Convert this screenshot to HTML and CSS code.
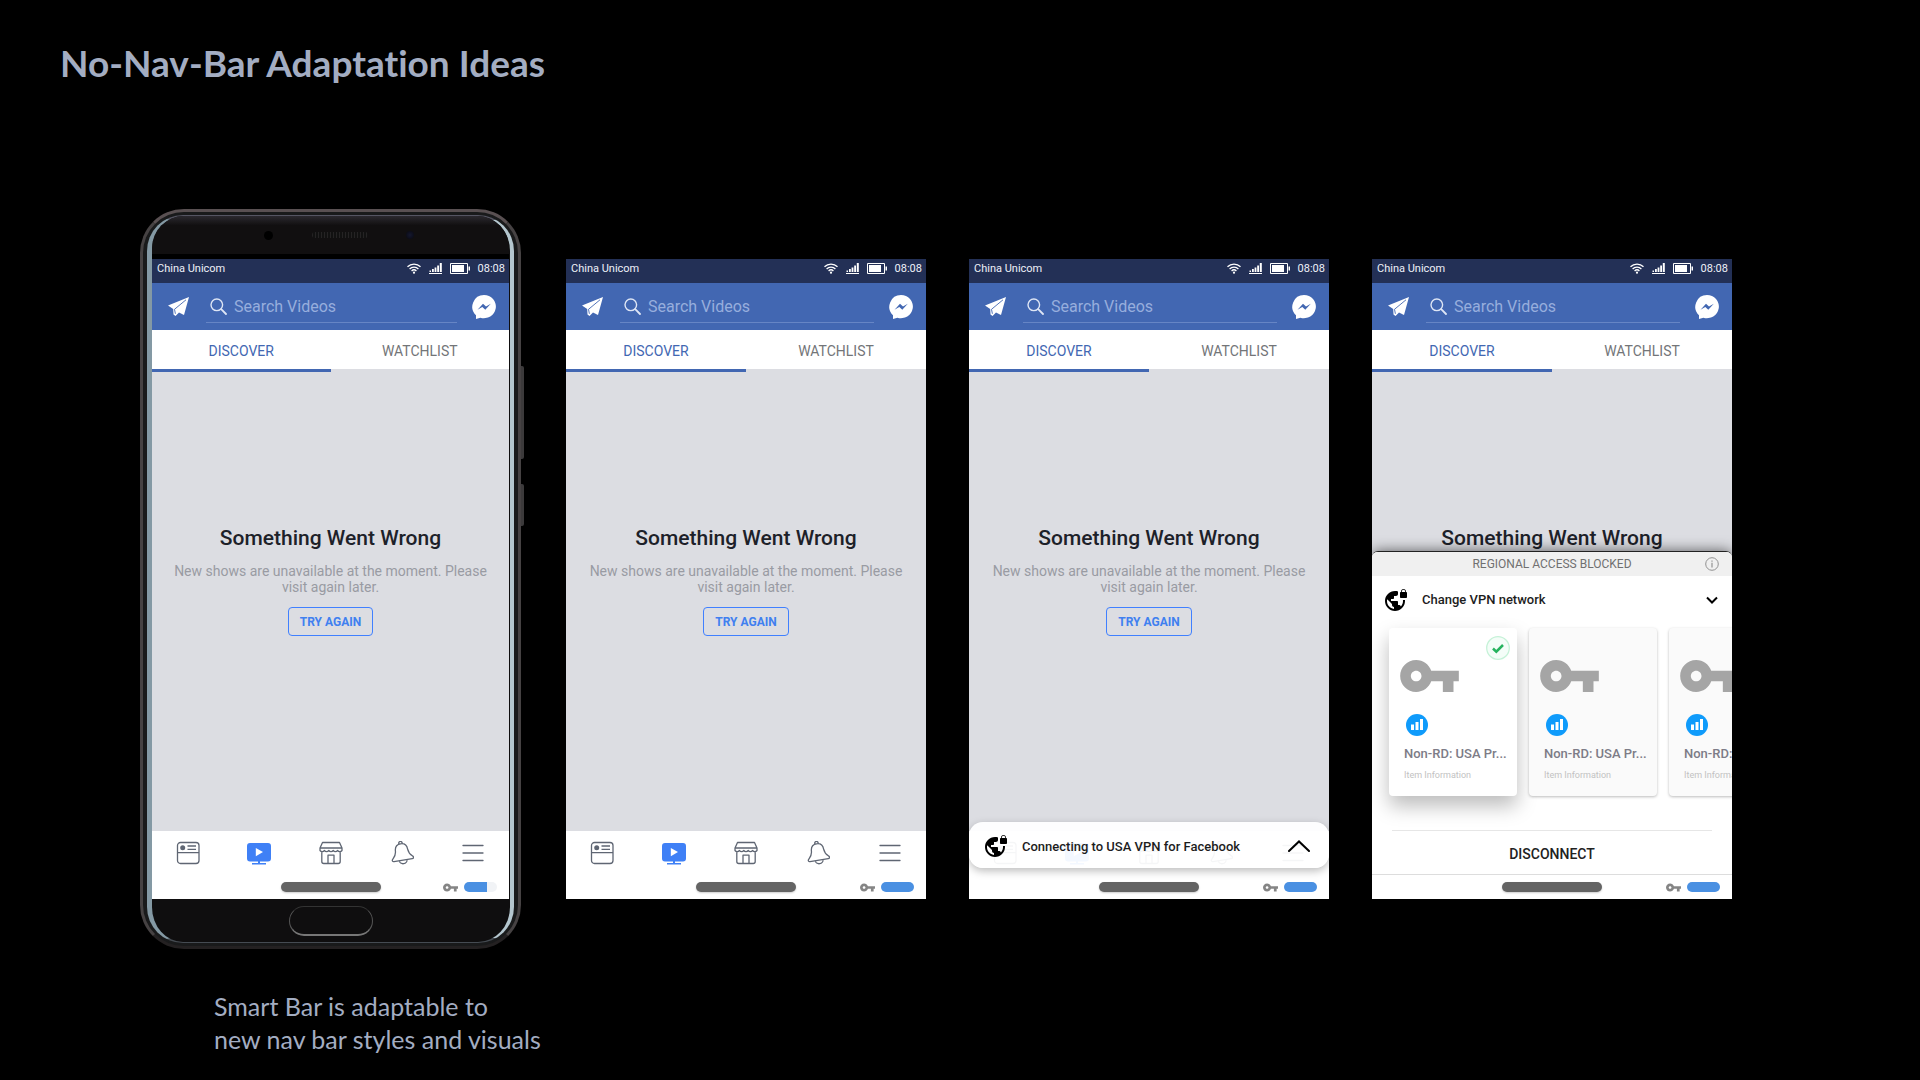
FILE: index.html
```html
<!DOCTYPE html>
<html lang="en">
<head>
<meta charset="utf-8">
<meta name="viewport" content="width=device-width, initial-scale=1">
<title>No-Nav-Bar Adaptation Ideas</title>
<link rel="stylesheet" href="styles.css">
</head>
<body>
<svg class="sprite" width="0" height="0" aria-hidden="true">
  <symbol id="wifi" viewBox="0 0 14 11"><g fill="none" stroke="#fff" stroke-width="1.3"><path d="M.5 3.8a9.2 9.2 0 0 1 13 0M2.6 6a6.2 6.2 0 0 1 8.8 0M4.6 8a3.4 3.4 0 0 1 4.8 0"/></g><circle cx="7" cy="9.7" r="1.1" fill="#fff"/></symbol>
  <symbol id="signal" viewBox="0 0 13 11"><path fill="#fff" d="M0 10h13v1H0zM.5 7.500h1.500v1.500H.5zM3 6h1.800v3H3zM5.600 4.500h1.800V9H5.600zM8.200 2.500H10V9H8.200zM10.800 0h2v9h-2z"/></symbol>
  <symbol id="battery" viewBox="0 0 20 11"><path fill="none" stroke="#fff" d="M.5.5h17v10H.5z"/><path fill="#fff" d="M2 2h12v7H2zM18.500 3.500H20v4h-1.500z"/></symbol>
  <symbol id="plane" viewBox="0 0 21 19"><path fill="#fff" d="M0 8.500 21 0 16 18l-5-2.500L7.500 19l-2-1.500L5.200 12z"/><path d="M18 2.800 6.500 12.300l.9 4.500" stroke="#4267b2" stroke-width=".9" fill="none"/></symbol>
  <symbol id="search" viewBox="0 0 17 17"><g fill="none" stroke="#dfe6f5" stroke-linecap="round"><circle cx="6.800" cy="6.800" r="5.800" stroke-width="1.400"/><path d="m11.200 11.200 4.800 4.800" stroke-width="1.800"/></g></symbol>
  <symbol id="messenger" viewBox="0 0 24 24"><path fill="#fff" d="M12 0a12 11.600 0 1 1-3.600 22.700L4 24v-3.800A11.700 11.700 0 0 1 12 0z"/><path fill="#4267b2" d="m5.500 14.800 5.500-6 3 2.800 4.800-2.800-5.500 6-3-2.700z"/></symbol>
  <symbol id="feed" viewBox="0 0 24 24"><g fill="none" stroke="#5f6673" stroke-width="1.300"><rect x="1.500" y="1.500" width="21.500" height="21" rx="3"/><path d="M1.500 11.700H23M11.500 5h8.500M11.500 8.300h8.500"/></g><circle cx="6.700" cy="6.700" r="2.500" fill="#5f6673"/></symbol>
  <symbol id="watch" viewBox="0 0 24 24"><path fill="#3f80f6" d="M3 2h18a3 3 0 0 1 3 3v12.500a3 3 0 0 1-3 3h-8V22h6v1.500H5V22h6v-1.500H3a3 3 0 0 1-3-3V5a3 3 0 0 1 3-3z"/><path fill="#fff" d="m8.800 7 7.200 4-7.200 4.200z"/></symbol>
  <symbol id="market" viewBox="0 0 24 24"><g fill="none" stroke="#5f6673" stroke-width="1.300" stroke-linejoin="round"><path d="M3.500 1.500h17L23 7v2.500a2.700 2.700 0 0 1-4.400 0 2.700 2.700 0 0 1-4.400 0 2.700 2.700 0 0 1-4.400 0 2.700 2.700 0 0 1-4.400 0A2.700 2.700 0 0 1 1 9.500V7zM1 7h22M2.800 11v9.500a2 2 0 0 0 2 2h14.400a2 2 0 0 0 2-2V11M9 22.500v-8.300h6v8.300"/></g></symbol>
  <symbol id="bell" viewBox="0 0 24 24"><g fill="none" stroke="#5f6673" stroke-width="1.300" stroke-linejoin="round" transform="rotate(-9 12 12)"><path d="M12 2.700c4 0 6 2.800 6.200 6.300.2 4.500 1.800 5.700 4 7.800 1 1 .6 2.400-1 2.400H2.800c-1.600 0-2-1.400-1-2.400 2.200-2.100 3.800-3.300 4-7.800.2-3.500 2.200-6.300 6.200-6.300zM10.500 2.800a1.700 1.700 0 1 1 3 0M8 19.200a4 3.600 0 0 0 8 0"/></g></symbol>
  <symbol id="menu" viewBox="0 0 24 24"><path fill="none" stroke="#5f6673" stroke-width="1.300" stroke-linecap="round" d="M2 4.500h20M2 12h20M2 19.500h20"/></symbol>
  <symbol id="key" viewBox="1 6 22 12"><path fill="currentColor" d="M12.650 10C11.830 7.670 9.610 6 7 6c-3.310 0-6 2.690-6 6s2.690 6 6 6c2.610 0 4.830-1.670 5.650-4H17v4h4v-4h2v-4H12.650zM7 14c-1.100 0-2-.9-2-2s.9-2 2-2 2 .9 2 2-.9 2-2 2z"/></symbol>
  <symbol id="vpn" viewBox="0 0 24 24"><path d="M22 4v-.5C22 2.120 20.880 1 19.500 1S17 2.120 17 3.500V4c-.55 0-1 .45-1 1v4c0 .55.45 1 1 1h5c.55 0 1-.45 1-1V5c0-.55-.45-1-1-1zm-.8 0h-3.400v-.5c0-.94.76-1.700 1.700-1.700s1.700.76 1.700 1.700V4zm-2.280 8c.04.33.08.66.08 1 0 2.080-.8 3.970-2.100 5.390-.26-.81-1-1.390-1.900-1.390h-1v-3c0-.55-.45-1-1-1H7v-2h2c.55 0 1-.45 1-1V8h2c1.100 0 2-.9 2-2V3.460c-.95-.3-1.950-.46-3-.46C5.480 3 1 7.480 1 13s4.480 10 10 10 10-4.480 10-10c0-.34-.02-.67-.05-1h-2.030zM10 20.930c-3.950-.49-7-3.850-7-7.930 0-.62.08-1.210.21-1.790L8 16v1c0 1.100.9 2 2 2v1.930z"/></symbol>
  <symbol id="up" viewBox="0 0 22 12"><path d="M1 11 11 1.500 21 11" fill="none" stroke="#000" stroke-width="2" stroke-linecap="round"/></symbol>
  <symbol id="down" viewBox="0 0 12 8"><path d="m1 1.500 5 5 5-5" fill="none" stroke="#000" stroke-width="2"/></symbol>
  <symbol id="info" viewBox="0 0 14 14"><circle cx="7" cy="7" r="6.300" fill="none" stroke="#929292"/><path fill="#929292" d="M6.400 3.500h1.200v1.300H6.400zM6.400 5.800h1.200v4.700H6.400z"/></symbol>
  <symbol id="check" viewBox="0 0 24 24"><circle cx="12" cy="12" r="11.300" fill="#f4fdf8" stroke="#c6f2d8" stroke-width="1.300"/><path d="m7 12.500 3.300 3.200L17 9" fill="none" stroke="#27b35f" stroke-width="2.500"/></symbol>
  <symbol id="stats" viewBox="0 0 22 22"><circle cx="11" cy="11" r="11" fill="#0f9bfb"/><path fill="#fff" d="M5 10.500h3V16H5zM9.500 8h3v8h-3zM14 5h3v11h-3z"/></symbol>
</svg>

<header class="page-header"><h1>No-Nav-Bar Adaptation Ideas</h1></header>

<main class="stage">
  <figure class="device">
    <div class="phone">
      <div class="glass">
        <div class="bezel bezel-top"><i class="sensor"></i><i class="speaker"></i><i class="camera"></i></div>
        <section class="screen">
          <div class="status"><span class="carrier">China Unicom</span><svg width="14" height="11"><use href="#wifi"/></svg><svg width="13" height="11"><use href="#signal"/></svg><svg width="20" height="11"><use href="#battery"/></svg><span>08:08</span></div>
          <div class="appbar"><button class="icon" aria-label="Send"><svg width="21" height="19"><use href="#plane"/></svg></button><label class="search"><svg width="17" height="17"><use href="#search"/></svg><input type="search" placeholder="Search Videos" aria-label="Search Videos"></label><button class="icon" aria-label="Messenger"><svg width="24" height="24"><use href="#messenger"/></svg></button></div>
          <nav class="tabs"><button class="tab active">DISCOVER</button><button class="tab">WATCHLIST</button></nav>
          <div class="content"><h2>Something Went Wrong</h2><p>New shows are unavailable at the moment. Please visit again later.</p><button class="retry">TRY AGAIN</button></div>
          <nav class="bottom-nav"><button class="icon" aria-label="Feed"><svg width="24" height="24"><use href="#feed"/></svg></button><button class="icon" aria-label="Watch"><svg width="24" height="24"><use href="#watch"/></svg></button><button class="icon" aria-label="Marketplace"><svg width="24" height="24"><use href="#market"/></svg></button><button class="icon" aria-label="Notifications"><svg width="24" height="24"><use href="#bell"/></svg></button><button class="icon" aria-label="Menu"><svg width="24" height="24"><use href="#menu"/></svg></button></nav>
          <div class="smart-bar"><button class="home" aria-label="Home"></button><div class="vpn-state"><svg width="15" height="9"><use href="#key"/></svg><span class="meter"><span class="meter-fill" style="width:70%"></span></span></div></div>
        </section>
        <div class="bezel bezel-bottom"><i class="home-key"></i></div>
      </div>
      <i class="side-key volume"></i><i class="side-key power"></i>
    </div>
    <figcaption>Smart Bar is adaptable to<br>new nav bar styles and visuals</figcaption>
  </figure>

  <section class="screen bare">
    <div class="status"><span class="carrier">China Unicom</span><svg width="14" height="11"><use href="#wifi"/></svg><svg width="13" height="11"><use href="#signal"/></svg><svg width="20" height="11"><use href="#battery"/></svg><span>08:08</span></div>
    <div class="appbar"><button class="icon" aria-label="Send"><svg width="21" height="19"><use href="#plane"/></svg></button><label class="search"><svg width="17" height="17"><use href="#search"/></svg><input type="search" placeholder="Search Videos" aria-label="Search Videos"></label><button class="icon" aria-label="Messenger"><svg width="24" height="24"><use href="#messenger"/></svg></button></div>
    <nav class="tabs"><button class="tab active">DISCOVER</button><button class="tab">WATCHLIST</button></nav>
    <div class="content"><h2>Something Went Wrong</h2><p>New shows are unavailable at the moment. Please visit again later.</p><button class="retry">TRY AGAIN</button></div>
    <nav class="bottom-nav"><button class="icon" aria-label="Feed"><svg width="24" height="24"><use href="#feed"/></svg></button><button class="icon" aria-label="Watch"><svg width="24" height="24"><use href="#watch"/></svg></button><button class="icon" aria-label="Marketplace"><svg width="24" height="24"><use href="#market"/></svg></button><button class="icon" aria-label="Notifications"><svg width="24" height="24"><use href="#bell"/></svg></button><button class="icon" aria-label="Menu"><svg width="24" height="24"><use href="#menu"/></svg></button></nav>
    <div class="smart-bar"><button class="home" aria-label="Home"></button><div class="vpn-state"><svg width="15" height="9"><use href="#key"/></svg><span class="meter"><span class="meter-fill" style="width:100%"></span></span></div></div>
  </section>

  <section class="screen bare">
    <div class="status"><span class="carrier">China Unicom</span><svg width="14" height="11"><use href="#wifi"/></svg><svg width="13" height="11"><use href="#signal"/></svg><svg width="20" height="11"><use href="#battery"/></svg><span>08:08</span></div>
    <div class="appbar"><button class="icon" aria-label="Send"><svg width="21" height="19"><use href="#plane"/></svg></button><label class="search"><svg width="17" height="17"><use href="#search"/></svg><input type="search" placeholder="Search Videos" aria-label="Search Videos"></label><button class="icon" aria-label="Messenger"><svg width="24" height="24"><use href="#messenger"/></svg></button></div>
    <nav class="tabs"><button class="tab active">DISCOVER</button><button class="tab">WATCHLIST</button></nav>
    <div class="content"><h2>Something Went Wrong</h2><p>New shows are unavailable at the moment. Please visit again later.</p><button class="retry">TRY AGAIN</button></div>
    <nav class="bottom-nav"><button class="icon" aria-label="Feed"><svg width="24" height="24"><use href="#feed"/></svg></button><button class="icon" aria-label="Watch"><svg width="24" height="24"><use href="#watch"/></svg></button><button class="icon" aria-label="Marketplace"><svg width="24" height="24"><use href="#market"/></svg></button><button class="icon" aria-label="Notifications"><svg width="24" height="24"><use href="#bell"/></svg></button><button class="icon" aria-label="Menu"><svg width="24" height="24"><use href="#menu"/></svg></button></nav>
    <div class="smart-bar"><button class="home" aria-label="Home"></button><div class="vpn-state"><svg width="15" height="9"><use href="#key"/></svg><span class="meter"><span class="meter-fill" style="width:100%"></span></span></div></div>
    <div class="toast"><svg width="24" height="24"><use href="#vpn"/></svg><span class="row-text">Connecting to USA VPN for Facebook</span><button class="icon" aria-label="Expand"><svg width="22" height="12"><use href="#up"/></svg></button></div>
  </section>

  <section class="screen bare">
    <div class="status"><span class="carrier">China Unicom</span><svg width="14" height="11"><use href="#wifi"/></svg><svg width="13" height="11"><use href="#signal"/></svg><svg width="20" height="11"><use href="#battery"/></svg><span>08:08</span></div>
    <div class="appbar"><button class="icon" aria-label="Send"><svg width="21" height="19"><use href="#plane"/></svg></button><label class="search"><svg width="17" height="17"><use href="#search"/></svg><input type="search" placeholder="Search Videos" aria-label="Search Videos"></label><button class="icon" aria-label="Messenger"><svg width="24" height="24"><use href="#messenger"/></svg></button></div>
    <nav class="tabs"><button class="tab active">DISCOVER</button><button class="tab">WATCHLIST</button></nav>
    <div class="content"><h2>Something Went Wrong</h2></div>
    <div class="bottom-nav"></div>
    <div class="smart-bar"><button class="home" aria-label="Home"></button><div class="vpn-state"><svg width="15" height="9"><use href="#key"/></svg><span class="meter"><span class="meter-fill" style="width:100%"></span></span></div></div>
    <div class="sheet">
      <div class="sheet-head"><span>REGIONAL ACCESS BLOCKED</span><button class="icon" aria-label="Information"><svg width="14" height="14"><use href="#info"/></svg></button></div>
      <div class="sheet-row"><svg width="24" height="24"><use href="#vpn"/></svg><span class="row-text">Change VPN network</span><button class="icon" aria-label="Collapse"><svg width="12" height="8"><use href="#down"/></svg></button></div>
      <div class="cards">
        <article class="card selected"><svg class="tick" width="24" height="24"><use href="#check"/></svg><svg class="card-key" width="59" height="32"><use href="#key"/></svg><svg class="card-stats" width="22" height="22"><use href="#stats"/></svg><h3>Non-RD: USA Pr...</h3><p>Item Information</p></article>
        <article class="card"><svg class="card-key" width="59" height="32"><use href="#key"/></svg><svg class="card-stats" width="22" height="22"><use href="#stats"/></svg><h3>Non-RD: USA Pr...</h3><p>Item Information</p></article>
        <article class="card"><svg class="card-key" width="59" height="32"><use href="#key"/></svg><svg class="card-stats" width="22" height="22"><use href="#stats"/></svg><h3>Non-RD: USA Pr...</h3><p>Item Information</p></article>
      </div>
      <button class="disconnect">DISCONNECT</button>
    </div>
  </section>
</main>
</body>
</html>
```
FILE: styles.css
```css
* { box-sizing: border-box; }

body {
  margin: 0;
  min-height: 100vh;
  background: #000;
  color: #a3adc2;
  font-family: Roboto, "Liberation Sans", sans-serif;
}

h1, h2, h3, p, figure { margin: 0; }
svg { display: block; flex: none; }
.sprite { position: absolute; }

button {
  padding: 0;
  border: 0;
  background: none;
  font: inherit;
  color: inherit;
}

.icon { display: flex; align-items: center; justify-content: center; }

.page-header { padding: 39px 60px 0; }

.page-header h1 {
  font-family: Lato, "Open Sans", sans-serif;
  font-size: 37px;
  font-weight: 700;
  line-height: 48px;
  font-variant-ligatures: none;
}

.stage {
  display: grid;
  grid-template-columns: minmax(0, 383fr) minmax(0, 360fr) minmax(0, 360fr) minmax(0, 360fr);
  gap: 43px;
  align-items: start;
  padding: 122px 188px 0 140px;
}

figcaption {
  margin: 41px 0 0 74px;
  font-family: Lato, "Open Sans", sans-serif;
  font-size: 25px;
  line-height: 33px;
  white-space: nowrap;
  font-variant-ligatures: none;
}

/* Handset */
.phone {
  position: relative;
  margin-right: 2px;
  padding: 3px 4px;
  border: 3px solid #464243;
  border-top-color: #595052;
  border-bottom-color: #242122;
  border-radius: 44px;
  background: #191a1b;
}

.glass {
  padding: 0 1px 0 0;
  border: solid;
  border-width: 1px 4px 1px 5px;
  border-color: #555562 #b4c6ce #454b52 #8499a4;
  border-radius: 36px;
  background: #0f0e0f;
}

.bezel { display: flex; align-items: center; height: 43px; }

.bezel-top {
  justify-content: space-between;
  padding: 0 95px 0 112px;
  border-bottom: 5px solid #000;
  border-radius: 32px 32px 0 0;
  background: linear-gradient(#2b292f, #110f10 25%);
}

.sensor { width: 9px; height: 9px; border-radius: 50%; background: #000; }
.speaker { width: 56px; height: 6px; border-radius: 3px; background: repeating-linear-gradient(90deg, #252324 0 1px, #111 1px 3px); }
.camera { width: 8px; height: 8px; border-radius: 50%; background: radial-gradient(#15182f, #08080f); }

.bezel-bottom { justify-content: center; }

.home-key {
  width: 84px;
  height: 30px;
  border: 1px solid #555;
  border-top-color: #333;
  border-bottom: 2px solid #777;
  border-radius: 15px;
}

.side-key {
  position: absolute;
  right: -6px;
  width: 3px;
  border-radius: 0 2px 2px 0;
  background: #3c3a3b;
}

.volume { top: 154px; height: 93px; }
.power { top: 272px; height: 42px; }

/* App screen */
.screen {
  position: relative;
  display: flex;
  flex-direction: column;
  overflow: hidden;
  background: #dcdde2;
}

.bare { margin-top: 50px; }

.status {
  display: flex;
  align-items: center;
  gap: 8px;
  height: 24px;
  padding: 0 4px 5px 5px;
  background: #233056;
  color: #eef1f8;
  font-size: 11px;
}

.carrier { flex: 1; }

.appbar {
  display: flex;
  align-items: center;
  height: 47px;
  padding: 0 13px 0 16px;
  background: #4267b2;
}

.search {
  display: flex;
  flex: 1;
  align-items: center;
  gap: 7px;
  min-width: 0;
  height: 32px;
  margin: 0 15px 0 17px;
  padding-left: 4px;
  border-bottom: 1px solid #6685c5;
}

.search input {
  flex: 1;
  min-width: 0;
  padding: 1px 0 0;
  border: 0;
  outline: 0;
  background: none;
  color: #fff;
  font: 16px Roboto, sans-serif;
}

.search input::placeholder { color: #97aedd; }

.tabs { display: flex; height: 42px; background: #fff; }

.tab {
  flex: 1;
  padding-top: 2px;
  border-bottom: 3px solid #dcdde2;
  color: #737578;
  font-size: 14px;
}

.tab.active { border-color: #4267b2; color: #4267b2; }

.content {
  display: flex;
  flex-direction: column;
  align-items: center;
  min-height: 459px;
  padding: 152px 16px 0;
  text-align: center;
}

.content h2 { color: #1d2129; font-size: 21px; font-weight: 500; line-height: 28px; }
.content p { margin: 11px 0 12px; color: #999ba3; font-size: 14px; line-height: 16px; }

.retry {
  height: 29px;
  padding: 0 11px;
  border: 1px solid #4080ff;
  border-radius: 4px;
  color: #4080f0;
  font-size: 12px;
  font-weight: 700;
}

.bottom-nav {
  display: flex;
  align-items: center;
  height: 44px;
  background: #fff;
}

.bottom-nav .icon { flex: 1; }

.smart-bar {
  position: relative;
  z-index: 1;
  display: grid;
  grid-template-columns: 1fr auto 1fr;
  align-items: center;
  height: 24px;
  padding-right: 12px;
  padding-left: 12px;
  background: #fff;
}

.home {
  grid-column: 2;
  width: 100px;
  height: 10px;
  border-radius: 5px;
  background: #646464;
  box-shadow: 0 1px 2px #0003;
}

.vpn-state { display: flex; align-items: center; justify-content: flex-end; gap: 6px; color: #858585; }
.meter { width: 33px; height: 10px; overflow: hidden; border-radius: 5px; background: #f1f3f6; }
.meter-fill { display: block; height: 100%; background: #4a90e2; }

/* Connection notice lying over the bottom navigation */
.toast {
  position: absolute;
  z-index: 2;
  right: 0;
  bottom: 31px;
  left: 0;
  display: flex;
  align-items: center;
  height: 46px;
  padding: 2px 19px 0 15px;
  border-radius: 14px;
  background: #fffffff0;
  box-shadow: 0 3px 8px #0004;
}

.row-text { flex: 1; margin-left: 14px; color: #1d1d1d; font-size: 13px; font-weight: 500; }

/* Network picker */
.sheet {
  position: absolute;
  right: 0;
  bottom: 24px;
  left: 0;
  overflow: hidden;
  border-top: 1px solid #222;
  border-bottom: 1px solid #ddd;
  border-radius: 6px 6px 0 0;
  background: #fff;
  box-shadow: 0 0 14px #0009;
}

.sheet-head {
  display: grid;
  grid-template-columns: 1fr auto 1fr;
  align-items: center;
  height: 24px;
  padding: 0 13px;
  background: #f0f0f0;
  color: #707070;
  font-size: 12px;
}

.sheet-head span { grid-column: 2; }
.sheet-head .icon { justify-self: end; }

.sheet-row { display: flex; align-items: center; height: 47px; padding: 0 14px 0 12px; }

.cards { display: flex; gap: 12px; padding: 5px 0 34px 17px; }

.card {
  position: relative;
  flex: none;
  width: 128px;
  height: 168px;
  padding: 32px 0 0 11px;
  border-radius: 4px;
  background: #fafafa;
  box-shadow: 0 1px 3px #0004;
}

.card.selected { background: #fff; box-shadow: 0 10px 20px #0004; }
.tick { position: absolute; top: 8px; right: 7px; }
.card-key { color: #a5a5a5; }
.card-stats { margin: 22px 0 0 6px; }
.card h3 { margin: 10px 0 0 4px; color: #7d7c87; font-size: 13px; font-weight: 500; line-height: 16px; }
.card p { margin: 7px 0 0 4px; color: #c2c2c2; font-size: 9px; line-height: 12px; }

.disconnect {
  display: block;
  width: calc(100% - 40px);
  height: 44px;
  margin: 0 20px;
  padding-top: 2px;
  border-top: 1px solid #e6e6e6;
  color: #222;
  font-size: 14px;
  font-weight: 500;
}
```
